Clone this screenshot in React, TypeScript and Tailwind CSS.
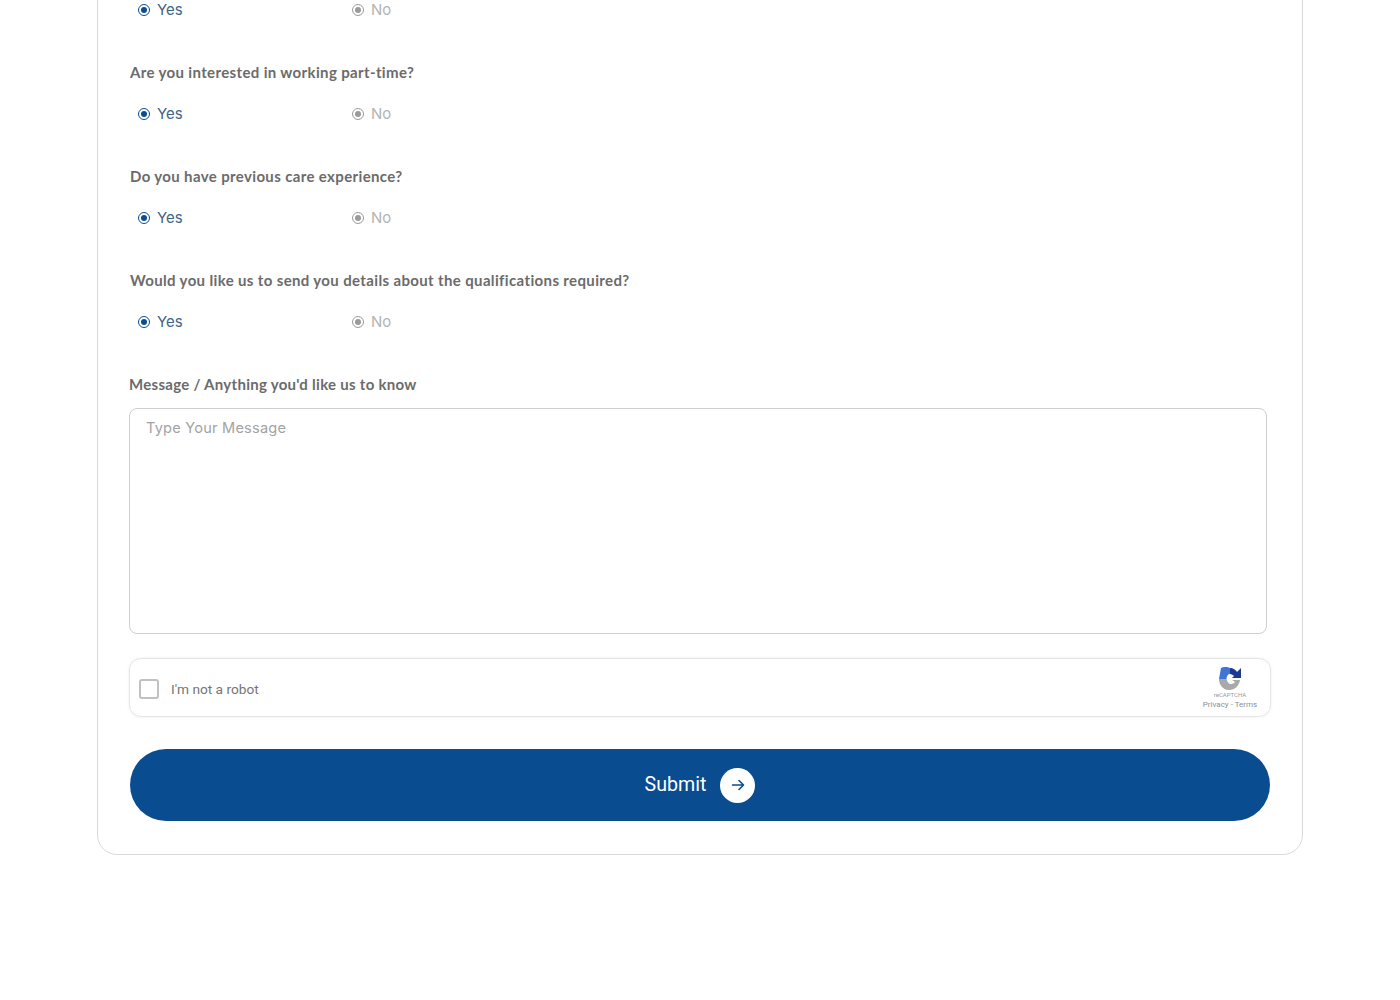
const questions = [
  "Are you interested in working part-time?",
  "Do you have previous care experience?",
  "Would you like us to send you details about the qualifications required?",
];

const RadioRow = () => (
  <div className="flex h-5 items-center pl-[9px] text-[15px] font-['Inter',sans-serif]">
    <div className="flex w-[214px] items-center gap-[7px] text-[#3f6485]">
      <span className="flex h-3 w-3 items-center justify-center rounded-full border-[1.5px] border-[#0b4d8f]">
        <span className="h-1.5 w-1.5 rounded-full bg-[#0b4d8f]" />
      </span>
      <span>Yes</span>
    </div>
    <div className="flex items-center gap-[7px] text-[#b4b4b4]">
      <span className="flex h-3 w-3 items-center justify-center rounded-full border-[1.5px] border-[#9a9a9a]">
        <span className="h-1.5 w-1.5 rounded-full bg-[#9a9a9a]" />
      </span>
      <span>No</span>
    </div>
  </div>
);

export default function App() {
  return (
    <div className="h-[1000px] overflow-hidden bg-white font-['Lato',sans-serif]">
      <div className="mx-auto -mt-6 w-[1206px] rounded-[20px] border border-[#d9d9d9] px-[31px] pb-[33px] pt-[23px]">
        <RadioRow />
        {questions.map((q) => (
          <div key={q}>
            <div className="mt-10 ml-px h-6 text-[15px] font-bold leading-6 tracking-[0.36px] text-[#6b6b6b]">
              {q}
            </div>
            <div className="mt-5">
              <RadioRow />
            </div>
          </div>
        ))}

        <div className="mt-10 h-6 text-[15px] font-bold leading-6 tracking-[0.28px] text-[#6b6b6b]">
          Message / Anything you'd like us to know
        </div>
        <div className="mt-3 h-[226px] w-[1138px] rounded-lg border border-[#cfcfcf] px-4 py-[9px] font-['Inter',sans-serif] text-[14.6px] leading-[21px] tracking-[0.2px] text-[#a3a3a3]">
          Type Your Message
        </div>

        <div className="mt-6 flex h-[59px] w-[1142px] items-center justify-between rounded-xl border border-[#e6e6e6] pl-[9px] pr-[12px] shadow-[0_0_3px_rgba(0,0,0,0.08)]">
          <div className="flex items-center gap-3 pt-1">
            <span className="h-5 w-5 rounded-[3px] border-2 border-[#c1c1c1] bg-white" />
            <span className="font-['Roboto',sans-serif] text-[13.7px] text-[#757575]">I'm not a robot</span>
          </div>
          <div className="flex w-[56px] flex-col items-center font-['Roboto',sans-serif]">
            <svg width="24" height="24" viewBox="0 0 24 24" className="mt-px">
              <path d="M3 1 C7 -1 12 0 15 3 L12 7 C10 7 8.5 9 8.5 12 H1 Z" fill="#3f75d3" />
              <path d="M12 1 C15 1 18 3 19 5 L23 1 V11 H14 L16 9 C15 8 13.5 7 12 7 Z" fill="#1c3a94" />
              <path d="M1 12 H8.5 C9 15 11 17 13 17 C15 17 16 16 17 15 L14 13 H22 C21 19 17 23 11 23 C5 23 1 18 1 12 Z" fill="#a9a9a9" />
            </svg>
            <span className="text-[6px] leading-[8px] text-[#9b9b9b]">reCAPTCHA</span>
            <span className="whitespace-nowrap text-[8px] leading-[11px] text-[#8f8f8f]">Privacy - Terms</span>
          </div>
        </div>

        <div className="mt-8 ml-px flex h-[72px] w-[1140px] items-center justify-center gap-[14px] rounded-full bg-[#0a4c90]">
          <span className="font-['Roboto',sans-serif] text-[19.6px] text-white">Submit</span>
          <span className="flex h-[35px] w-[35px] items-center justify-center rounded-full bg-white">
            <svg width="16" height="16" viewBox="0 0 16 16" fill="none" stroke="#0a4c90" strokeWidth="1.6" strokeLinecap="round" strokeLinejoin="round">
              <path d="M2.5 8 H13.5 M9 3.5 L13.5 8 L9 12.5" />
            </svg>
          </span>
        </div>
      </div>
    </div>
  );
}
